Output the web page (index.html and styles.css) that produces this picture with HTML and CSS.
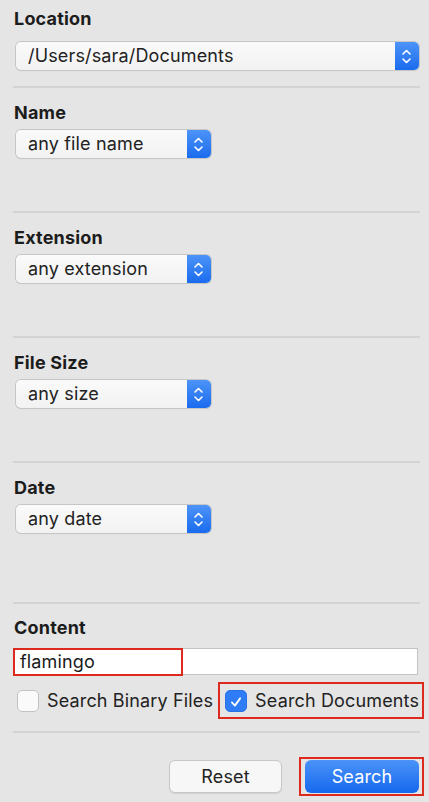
FILE: index.html
```html
<!DOCTYPE html>
<html lang="en">
<head>
<meta charset="utf-8">
<title>Find</title>
<link rel="stylesheet" href="styles.css">
</head>
<body>
<div class="panel">
  <section class="section section-location">
    <div class="label">Location</div>
    <div class="select select-wide">
      <span class="select-text">/Users/sara/Documents</span>
      <span class="select-arrows"><svg width="24" height="28" viewBox="0 0 24 28"><path d="M8 12 L11.5 8.5 L15 12 M8 17 L11.5 20.5 L15 17" fill="none" stroke="#fff" stroke-width="1.6" stroke-linecap="round" stroke-linejoin="round"/></svg></span>
    </div>
  </section>
  <section class="section">
    <div class="label">Name</div>
    <div class="select">
      <span class="select-text">any file name</span>
      <span class="select-arrows"><svg width="24" height="28" viewBox="0 0 24 28"><path d="M8 12 L11.5 8.5 L15 12 M8 17 L11.5 20.5 L15 17" fill="none" stroke="#fff" stroke-width="1.6" stroke-linecap="round" stroke-linejoin="round"/></svg></span>
    </div>
  </section>
  <section class="section">
    <div class="label">Extension</div>
    <div class="select">
      <span class="select-text">any extension</span>
      <span class="select-arrows"><svg width="24" height="28" viewBox="0 0 24 28"><path d="M8 12 L11.5 8.5 L15 12 M8 17 L11.5 20.5 L15 17" fill="none" stroke="#fff" stroke-width="1.6" stroke-linecap="round" stroke-linejoin="round"/></svg></span>
    </div>
  </section>
  <section class="section">
    <div class="label">File Size</div>
    <div class="select">
      <span class="select-text">any size</span>
      <span class="select-arrows"><svg width="24" height="28" viewBox="0 0 24 28"><path d="M8 12 L11.5 8.5 L15 12 M8 17 L11.5 20.5 L15 17" fill="none" stroke="#fff" stroke-width="1.6" stroke-linecap="round" stroke-linejoin="round"/></svg></span>
    </div>
  </section>
  <section class="section section-date">
    <div class="label">Date</div>
    <div class="select">
      <span class="select-text">any date</span>
      <span class="select-arrows"><svg width="24" height="28" viewBox="0 0 24 28"><path d="M8 12 L11.5 8.5 L15 12 M8 17 L11.5 20.5 L15 17" fill="none" stroke="#fff" stroke-width="1.6" stroke-linecap="round" stroke-linejoin="round"/></svg></span>
    </div>
  </section>
  <section class="section section-content">
    <div class="label">Content</div>
    <div class="textfield">
      <span class="field-text">flamingo</span>
      <span class="highlight-box"></span>
    </div>
    <div class="check-row">
      <label class="check">
        <span class="box"></span>
        <span class="check-text">Search Binary Files</span>
      </label>
      <label class="check check-marked">
        <span class="box box-on"><svg width="22" height="22" viewBox="0 0 22 22"><path d="M6.5 11.5 L9.8 15 L15.5 7" fill="none" stroke="#fff" stroke-width="2" stroke-linecap="round" stroke-linejoin="round"/></svg></span>
        <span class="check-text">Search Documents</span>
      </label>
    </div>
  </section>
  <div class="buttons">
    <button class="btn btn-reset">Reset</button>
    <span class="btn-mark"><button class="btn btn-search">Search</button></span>
  </div>
</div>
</body>
</html>
```

FILE: styles.css
```css
html, body {
  margin: 0;
  padding: 0;
  background: #e5e5e5;
}
body {
  font-family: Inter, "Liberation Sans", sans-serif;
  color: #222;
  width: 429px;
  height: 802px;
  overflow: hidden;
}
.panel {
  padding: 0 9px 0 13px;
}
.section {
  display: flex;
  flex-direction: column;
  align-items: flex-start;
  padding: 14px 0 53px;
  border-bottom: 2px solid #d3d3d3;
}
.section-location {
  padding: 8px 0 16px;
}
.section-date {
  padding-bottom: 69px;
}
.section-content {
  padding: 13px 0 12px;
}
.label {
  font-size: 18px;
  line-height: 21px;
  font-weight: 700;
  letter-spacing: 0.2px;
  color: #1c1c1c;
  margin-left: 1px;
  margin-bottom: 7px;
}
.section-location .label {
  margin-bottom: 13px;
}
.select {
  display: flex;
  align-items: stretch;
  width: 195px;
  height: 28px;
  margin-left: 3px;
  box-sizing: border-box;
  border-radius: 5px;
  background: linear-gradient(#fafafa, #f2f2f2);
  box-shadow: 0 0 0 1px #c6c6c6, 0 1px 1px rgba(0,0,0,0.12);
  overflow: hidden;
}
.select-wide {
  width: 403px;
}
.select-text {
  flex: 1;
  padding-left: 12px;
  font-size: 18px;
  line-height: 28px;
  letter-spacing: 0.15px;
  color: #222;
  white-space: nowrap;
}
.select-arrows {
  width: 24px;
  display: flex;
  background: linear-gradient(#4d94f8, #1a6bee);
}
.textfield {
  position: relative;
  width: 405px;
  height: 27px;
  margin-top: 3px;
  box-sizing: border-box;
  background: #fff;
  border: 1px solid #c4c4c4;
  display: flex;
  align-items: center;
}
.field-text {
  padding-left: 6px;
  font-size: 18px;
  letter-spacing: 0.15px;
  color: #1a1a1a;
}
.highlight-box {
  position: absolute;
  left: -1px;
  top: -1px;
  width: 170px;
  height: 28px;
  box-sizing: border-box;
  border: 2px solid #dc2a1e;
}
.check-row {
  display: flex;
  align-items: center;
  gap: 5px;
  margin-top: 7px;
  margin-right: -4px;
  align-self: stretch;
}
.check {
  display: flex;
  align-items: center;
  gap: 8px;
  font-size: 18px;
  letter-spacing: 0.15px;
  color: #222;
  height: 37px;
  box-sizing: border-box;
  padding-left: 4px;
  white-space: nowrap;
}
.check-marked {
  flex: 1;
  border: 2px solid #dc2a1e;
  padding: 0 0 0 5px;
}
.box {
  width: 22px;
  height: 22px;
  flex: none;
  box-sizing: border-box;
  border-radius: 5px;
  background: #fafafa;
  border: 1px solid #c2c2c2;
  display: flex;
}
.box-on {
  background: #2f7df6;
  border-color: #2a72e4;
}
.buttons {
  display: flex;
  justify-content: flex-end;
  align-items: center;
  gap: 17px;
  padding: 24px 0 0 0;
  margin-right: -4px;
}
.btn {
  font-family: inherit;
  font-size: 18px;
  letter-spacing: 0.15px;
  width: 113px;
  height: 33px;
  border-radius: 6px;
  margin: 0;
  padding: 0;
}
.btn-reset {
  background: #f7f7f7;
  border: 1px solid #c8c8c8;
  color: #222;
  box-shadow: 0 1px 1px rgba(0,0,0,0.1);
}
.btn-mark {
  display: flex;
  padding: 1px 3px 1px 4px;
  border: 2px solid #dc2a1e;
}
.btn-search {
  width: 114px;
  border: none;
  background: linear-gradient(#4b93f8, #1668ee);
  color: #fff;
}
```
